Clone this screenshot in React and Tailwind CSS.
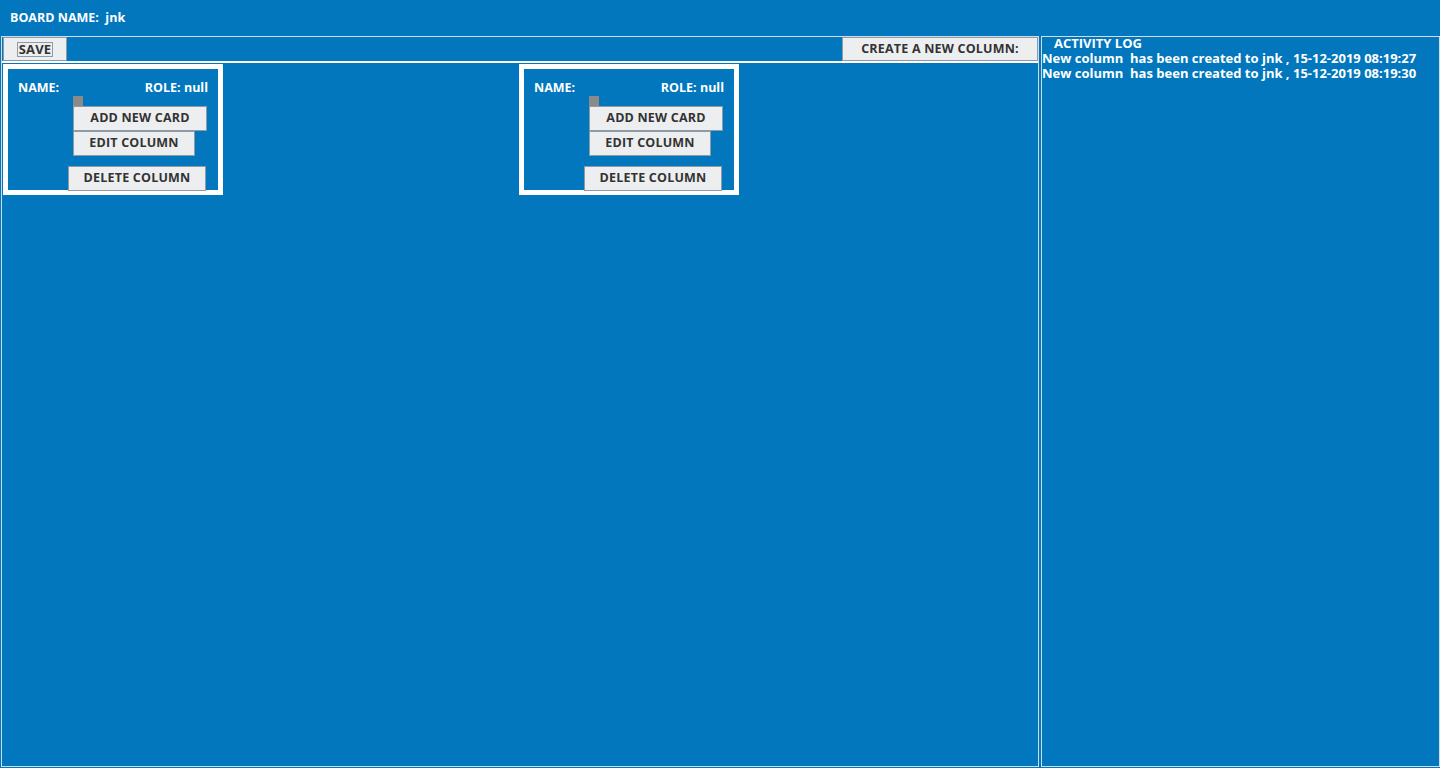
import React from 'react';

const btn =
  'bg-[#eceef0] border border-[#8e9aa6] text-[#333] font-bold text-[12.5px] leading-none tracking-[0.2px]';

function Column() {
  return (
    <div className="w-[220px] h-[131px] border-[5px] border-white bg-[#0277bd]">
      <div className="flex justify-between pl-[10px] pr-[10px] pt-[13px] text-white font-bold text-[12.5px] leading-none">
        <span>NAME:</span>
        <span>ROLE: null</span>
      </div>
      <div className="ml-[65px] mt-[1px] w-[10px] h-[10px] bg-[#8a8a8a]" />
      <div className={`${btn} ml-[65px] w-[134px] h-[25px] flex items-center justify-center`}>ADD NEW CARD</div>
      <div className={`${btn} ml-[65px] w-[122px] h-[25px] flex items-center justify-center`}>EDIT COLUMN</div>
      <div className={`${btn} ml-[60px] mt-[10px] w-[138px] h-[25px] flex items-center justify-center`}>DELETE COLUMN</div>
    </div>
  );
}

export default function App() {
  return (
    <div
      className="w-[1440px] h-[768px] bg-[#0277bd] text-white overflow-hidden flex flex-col"
      style={{ fontFamily: '"Open Sans", "DejaVu Sans", sans-serif' }}
    >
      <div className="h-[36px] flex items-center pl-[10px] font-bold text-[12.5px]">BOARD NAME:&nbsp; jnk</div>
      <div className="flex-1 flex gap-[2px] pl-[1px] pb-[1px]">
        <div className="w-[1038px] border border-[#cfdde8] flex flex-col">
          <div className="h-[26px] flex items-center justify-between pl-[1px] pr-0 border-b-2 border-white">
            <div className={`${btn} w-[64px] h-[24px] flex items-center justify-center`}>
              <span className="border border-[#8e9aa6] px-[1px] text-[13px]">SAVE</span>
            </div>
            <div className={`${btn} w-[196px] h-[24px] flex items-center justify-center`}>CREATE A NEW COLUMN:</div>
          </div>
          <div className="grid grid-cols-[516px_1fr] pt-[1px] pl-[1px]">
            <Column />
            <Column />
          </div>
        </div>
        <div className="flex-1 border border-[#cfdde8] font-bold text-[13px] leading-[15px]">
          <div className="pl-[12px] -mt-[1px]">ACTIVITY LOG</div>
          <div>New column&nbsp; has been created to jnk , 15-12-2019 08:19:27</div>
          <div>New column&nbsp; has been created to jnk , 15-12-2019 08:19:30</div>
        </div>
      </div>
    </div>
  );
}
